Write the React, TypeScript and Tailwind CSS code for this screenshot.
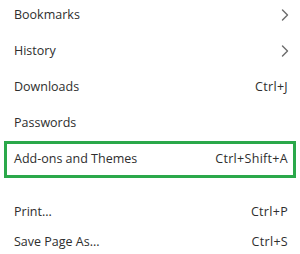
import { ChevronRight } from 'lucide-react'

type Item = { label: string; shortcut?: string; sub?: boolean }

function Row({ item, h }: { item: Item; h: string }) {
  return (
    <div className={`flex items-center justify-between pl-[14px] pr-[12px] ${h}`}>
      <span>{item.label}</span>
      {item.sub ? (
        <ChevronRight className="w-[20px] h-[20px] text-[#6e6e6e] mr-[-7px]" strokeWidth={1.7} />
      ) : (
        <span className="tracking-[0.3px]">{item.shortcut}</span>
      )}
    </div>
  )
}

export default function App() {
  return (
    <div
      className="w-[300px] h-[254px] bg-white text-[#2e2e2e] text-[12.5px] overflow-hidden"
      style={{ fontFamily: '"Open Sans", "Noto Sans", sans-serif' }}
    >
      <Row item={{ label: 'Bookmarks', sub: true }} h="h-[33px] pb-[3px]" />
      <Row item={{ label: 'History', sub: true }} h="h-[36px]" />
      <Row item={{ label: 'Downloads', shortcut: 'Ctrl+J' }} h="h-[36px]" />
      <Row item={{ label: 'Passwords' }} h="h-[36px]" />

      {/* highlighted entry */}
      <div className="ml-[4px] mr-[4px] h-[37px] border-[3px] border-[#2aa84a] flex items-center justify-between pl-[7px] pr-[5px]">
        <span>Add-ons and Themes</span>
        <span className="tracking-[0.3px]">Ctrl+Shift+A</span>
      </div>

      <div className="h-[19px]" />
      <Row item={{ label: 'Print...', shortcut: 'Ctrl+P' }} h="h-[30px]" />
      <Row item={{ label: 'Save Page As...', shortcut: 'Ctrl+S' }} h="h-[30px]" />
    </div>
  )
}
